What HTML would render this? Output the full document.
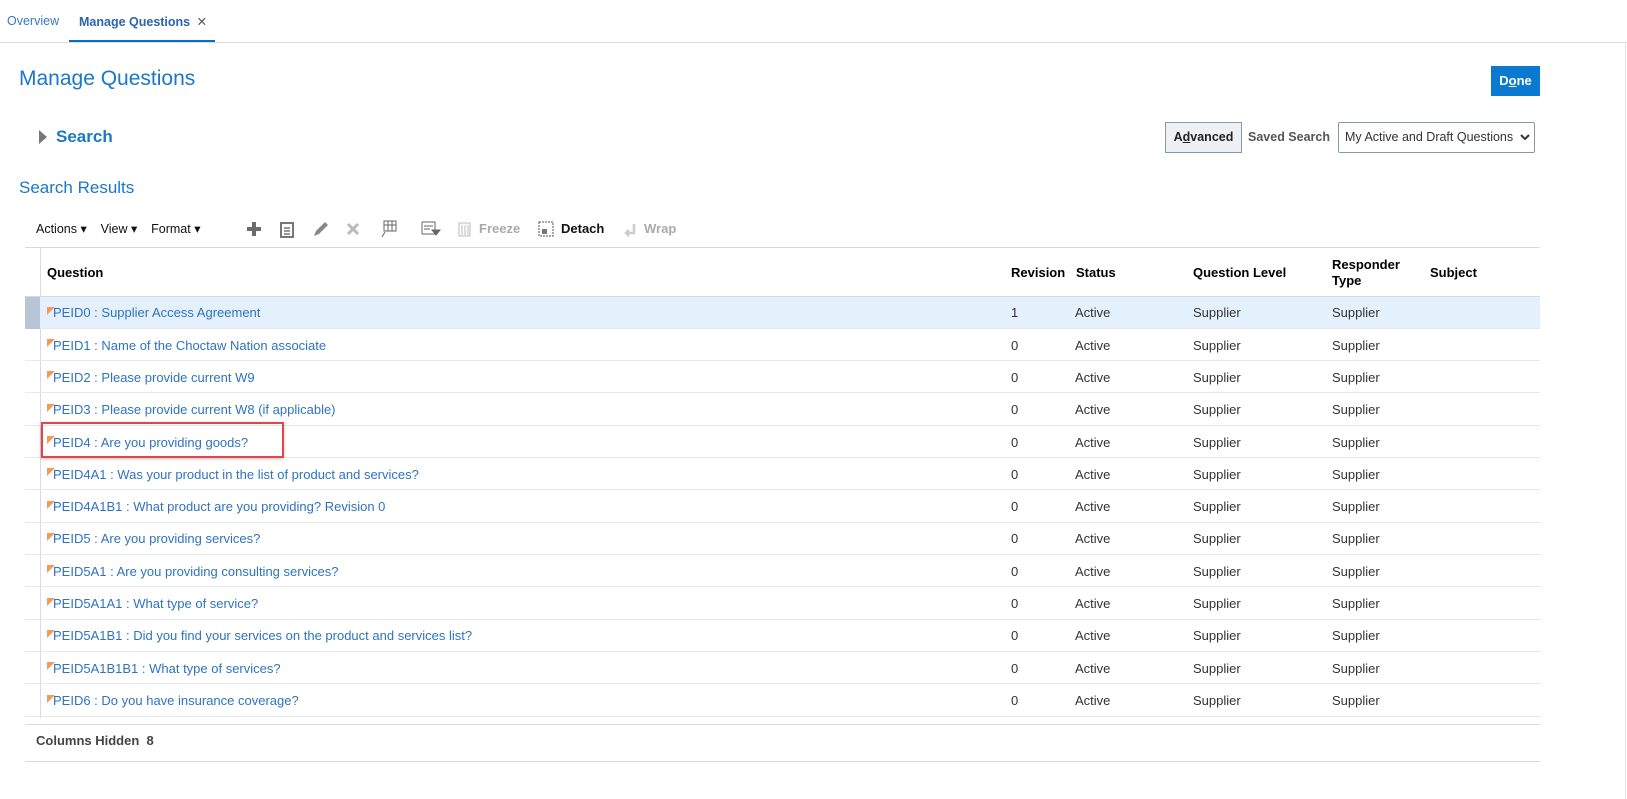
<!DOCTYPE html>
<html><head><meta charset="utf-8"><style>
*{margin:0;padding:0;box-sizing:border-box}
body{width:1627px;height:799px;background:#fff;font-family:"Liberation Sans",Arial,sans-serif;font-size:13px;color:#333;position:relative;overflow:hidden}
.a{position:absolute;white-space:nowrap}
.lnk{color:#2f73c0}
.hdr{font-weight:bold;color:#000;font-size:13px}
.row{position:absolute;left:25px;width:1515px;height:32px;border-bottom:1px solid #e6e9ec}
.flag{position:absolute;left:22px;top:10px;width:0;height:0;border-top:8px solid #f49a5b;border-right:8px solid transparent}
.ic{position:absolute}
</style></head><body>
<div class="a" style="left:7px;top:14px;color:#3a78c2;font-size:12.5px">Overview</div>
<div class="a" style="left:79px;top:14px;color:#2a65ad;font-weight:bold;font-size:12.5px">Manage Questions <span style="color:#555;font-weight:normal;margin-left:3px">✕</span></div>
<div class="a" style="left:69px;top:40px;width:146px;height:3px;background:#0b6bc9"></div>
<div class="a" style="left:0;top:42px;width:1627px;height:1px;background:#d9dde1"></div>
<div class="a" style="left:1625px;top:42px;width:1px;height:757px;background:#e2e5e8"></div>

<div class="a" style="left:19px;top:67px;font-size:21px;color:#1a78c8">Manage Questions</div>
<div class="a" style="left:1491px;top:66px;width:49px;height:30px;background:#0a7ad1;color:#fff;font-weight:bold;text-align:center;line-height:30px">D<u>o</u>ne</div>

<div class="a" style="left:39px;top:130px;width:0;height:0;border-left:8px solid #777;border-top:7px solid transparent;border-bottom:7px solid transparent"></div>
<div class="a" style="left:56px;top:127px;font-size:17px;font-weight:bold;color:#1a78c8">Search</div>
<div class="a" style="left:1165px;top:122px;width:77px;height:31px;border:1px solid #8a98a6;background:#eef1f4;font-weight:bold;color:#222;text-align:center;line-height:29px;font-size:12.5px">A<u>d</u>vanced</div>
<div class="a" style="left:1248px;top:130px;font-weight:bold;color:#555;font-size:12.5px">Saved Search</div>
<div class="a" style="left:1338px;top:122px;width:197px;height:31px;border:1px solid #8a98a6;border-radius:2px;color:#333;line-height:29px;padding-left:6px;font-size:12.5px;background:#fff">My Active and Draft Questions</div>
<svg class="a" style="left:1519px;top:132px" width="12" height="10"><path d="M2 3 L6 7 L10 3" stroke="#333" stroke-width="2" fill="none"/></svg>

<div class="a" style="left:19px;top:178px;font-size:17px;color:#1a78c8">Search Results</div>

<div class="a" style="left:36px;top:221px;color:#111;font-size:12.5px">Actions ▾&nbsp;&nbsp;&nbsp; View ▾&nbsp;&nbsp;&nbsp; Format ▾</div>
<svg class="ic" style="left:246px;top:220px" width="420" height="18">
<path d="M8 2v14M1 9h14" stroke="#6b6b6b" stroke-width="4"/>
<rect x="35" y="3" width="12" height="14" fill="none" stroke="#777" stroke-width="2"/><path d="M38 8h6M38 11h6M38 14h6" stroke="#777" stroke-width="1.5"/>
<path d="M68 16l2-5 9-9 3 3-9 9z" fill="#888"/>
<path d="M102 4l10 10M112 4l-10 10" stroke="#bbb" stroke-width="3"/>
<rect x="138" y="1" width="12" height="10" fill="none" stroke="#666"/><path d="M138 5h12M142 1v10M146 1v10M136 17l3-5" stroke="#666"/>
<rect x="176" y="2" width="13" height="12" fill="none" stroke="#666"/><path d="M178 6h9M178 9h6M186 10h8l-4 5z" stroke="#666" fill="#666"/>
<rect x="213" y="3" width="11" height="13" fill="none" stroke="#bbb"/><path d="M216 5v10M219 5v10M222 5v10" stroke="#bbb"/>
<rect x="293" y="2" width="14" height="14" fill="none" stroke="#555" stroke-dasharray="2 1"/><rect x="296" y="9" width="5" height="5" fill="#777"/>
<path d="M388 4v9h-8M383 10l-3 3 3 3" stroke="#ccc" stroke-width="2.5" fill="none"/>
</svg>
<div class="a" style="left:479px;top:221px;font-weight:bold;color:#aaa">Freeze</div>
<div class="a" style="left:561px;top:221px;font-weight:bold;color:#111">Detach</div>
<div class="a" style="left:644px;top:221px;font-weight:bold;color:#aaa">Wrap</div>

<div class="a" style="left:25px;top:247px;width:1515px;height:1px;background:#d5dbe1"></div>
<div class="a" style="left:40px;top:248px;width:1px;height:470px;background:#d5dbe1"></div>
<div class="a" style="left:25px;top:296px;width:1515px;height:1px;background:#d5dbe1"></div>
<div class="a hdr" style="left:47px;top:265px">Question</div>
<div class="a hdr" style="left:1011px;top:265px">Revision</div>
<div class="a hdr" style="left:1076px;top:265px">Status</div>
<div class="a hdr" style="left:1193px;top:265px">Question Level</div>
<div class="a hdr" style="left:1332px;top:257px;line-height:16px">Responder<br>Type</div>
<div class="a hdr" style="left:1430px;top:265px">Subject</div>

<div class="row" style="top:297px;background:#e4f0fb"><div style="position:absolute;left:0;top:0;width:15px;height:32px;background:#b6c6d6"></div><div class="flag"></div><span class="a lnk" style="left:28px;top:8px">PEID0 : Supplier Access Agreement</span><span class="a" style="left:986px;top:8px">1</span><span class="a" style="left:1050px;top:8px">Active</span><span class="a" style="left:1168px;top:8px">Supplier</span><span class="a" style="left:1307px;top:8px">Supplier</span></div>
<div class="row" style="top:329px"><div class="flag"></div><span class="a lnk" style="left:28px;top:9px">PEID1 : Name of the Choctaw Nation associate</span><span class="a" style="left:986px;top:9px">0</span><span class="a" style="left:1050px;top:9px">Active</span><span class="a" style="left:1168px;top:9px">Supplier</span><span class="a" style="left:1307px;top:9px">Supplier</span></div>
<div class="row" style="top:361px"><div class="flag"></div><span class="a lnk" style="left:28px;top:9px">PEID2 : Please provide current W9</span><span class="a" style="left:986px;top:9px">0</span><span class="a" style="left:1050px;top:9px">Active</span><span class="a" style="left:1168px;top:9px">Supplier</span><span class="a" style="left:1307px;top:9px">Supplier</span></div>
<div class="row" style="top:394px"><div class="flag"></div><span class="a lnk" style="left:28px;top:8px">PEID3 : Please provide current W8 (if applicable)</span><span class="a" style="left:986px;top:8px">0</span><span class="a" style="left:1050px;top:8px">Active</span><span class="a" style="left:1168px;top:8px">Supplier</span><span class="a" style="left:1307px;top:8px">Supplier</span></div>
<div class="row" style="top:426px"><div class="flag"></div><span class="a lnk" style="left:28px;top:9px">PEID4 : Are you providing goods?</span><span class="a" style="left:986px;top:9px">0</span><span class="a" style="left:1050px;top:9px">Active</span><span class="a" style="left:1168px;top:9px">Supplier</span><span class="a" style="left:1307px;top:9px">Supplier</span></div>
<div class="row" style="top:458px"><div class="flag"></div><span class="a lnk" style="left:28px;top:9px">PEID4A1 : Was your product in the list of product and services?</span><span class="a" style="left:986px;top:9px">0</span><span class="a" style="left:1050px;top:9px">Active</span><span class="a" style="left:1168px;top:9px">Supplier</span><span class="a" style="left:1307px;top:9px">Supplier</span></div>
<div class="row" style="top:491px"><div class="flag"></div><span class="a lnk" style="left:28px;top:8px">PEID4A1B1 : What product are you providing? Revision 0</span><span class="a" style="left:986px;top:8px">0</span><span class="a" style="left:1050px;top:8px">Active</span><span class="a" style="left:1168px;top:8px">Supplier</span><span class="a" style="left:1307px;top:8px">Supplier</span></div>
<div class="row" style="top:523px"><div class="flag"></div><span class="a lnk" style="left:28px;top:8px">PEID5 : Are you providing services?</span><span class="a" style="left:986px;top:8px">0</span><span class="a" style="left:1050px;top:8px">Active</span><span class="a" style="left:1168px;top:8px">Supplier</span><span class="a" style="left:1307px;top:8px">Supplier</span></div>
<div class="row" style="top:555px"><div class="flag"></div><span class="a lnk" style="left:28px;top:9px">PEID5A1 : Are you providing consulting services?</span><span class="a" style="left:986px;top:9px">0</span><span class="a" style="left:1050px;top:9px">Active</span><span class="a" style="left:1168px;top:9px">Supplier</span><span class="a" style="left:1307px;top:9px">Supplier</span></div>
<div class="row" style="top:588px"><div class="flag"></div><span class="a lnk" style="left:28px;top:8px">PEID5A1A1 : What type of service?</span><span class="a" style="left:986px;top:8px">0</span><span class="a" style="left:1050px;top:8px">Active</span><span class="a" style="left:1168px;top:8px">Supplier</span><span class="a" style="left:1307px;top:8px">Supplier</span></div>
<div class="row" style="top:620px"><div class="flag"></div><span class="a lnk" style="left:28px;top:8px">PEID5A1B1 : Did you find your services on the product and services list?</span><span class="a" style="left:986px;top:8px">0</span><span class="a" style="left:1050px;top:8px">Active</span><span class="a" style="left:1168px;top:8px">Supplier</span><span class="a" style="left:1307px;top:8px">Supplier</span></div>
<div class="row" style="top:652px"><div class="flag"></div><span class="a lnk" style="left:28px;top:9px">PEID5A1B1B1 : What type of services?</span><span class="a" style="left:986px;top:9px">0</span><span class="a" style="left:1050px;top:9px">Active</span><span class="a" style="left:1168px;top:9px">Supplier</span><span class="a" style="left:1307px;top:9px">Supplier</span></div>
<div class="row" style="top:685px"><div class="flag"></div><span class="a lnk" style="left:28px;top:8px">PEID6 : Do you have insurance coverage?</span><span class="a" style="left:986px;top:8px">0</span><span class="a" style="left:1050px;top:8px">Active</span><span class="a" style="left:1168px;top:8px">Supplier</span><span class="a" style="left:1307px;top:8px">Supplier</span></div>

<div class="a" style="left:41px;top:422px;width:243px;height:36px;border:2px solid #e2454a;box-shadow:0 1px 3px rgba(0,0,0,.25)"></div>

<div class="a" style="left:25px;top:724px;width:1515px;height:1px;background:#d5dbe1"></div>
<div class="a" style="left:36px;top:733px;font-weight:bold;color:#444">Columns Hidden&nbsp; 8</div>
<div class="a" style="left:25px;top:761px;width:1515px;height:1px;background:#d5dbe1"></div>
</body></html>
